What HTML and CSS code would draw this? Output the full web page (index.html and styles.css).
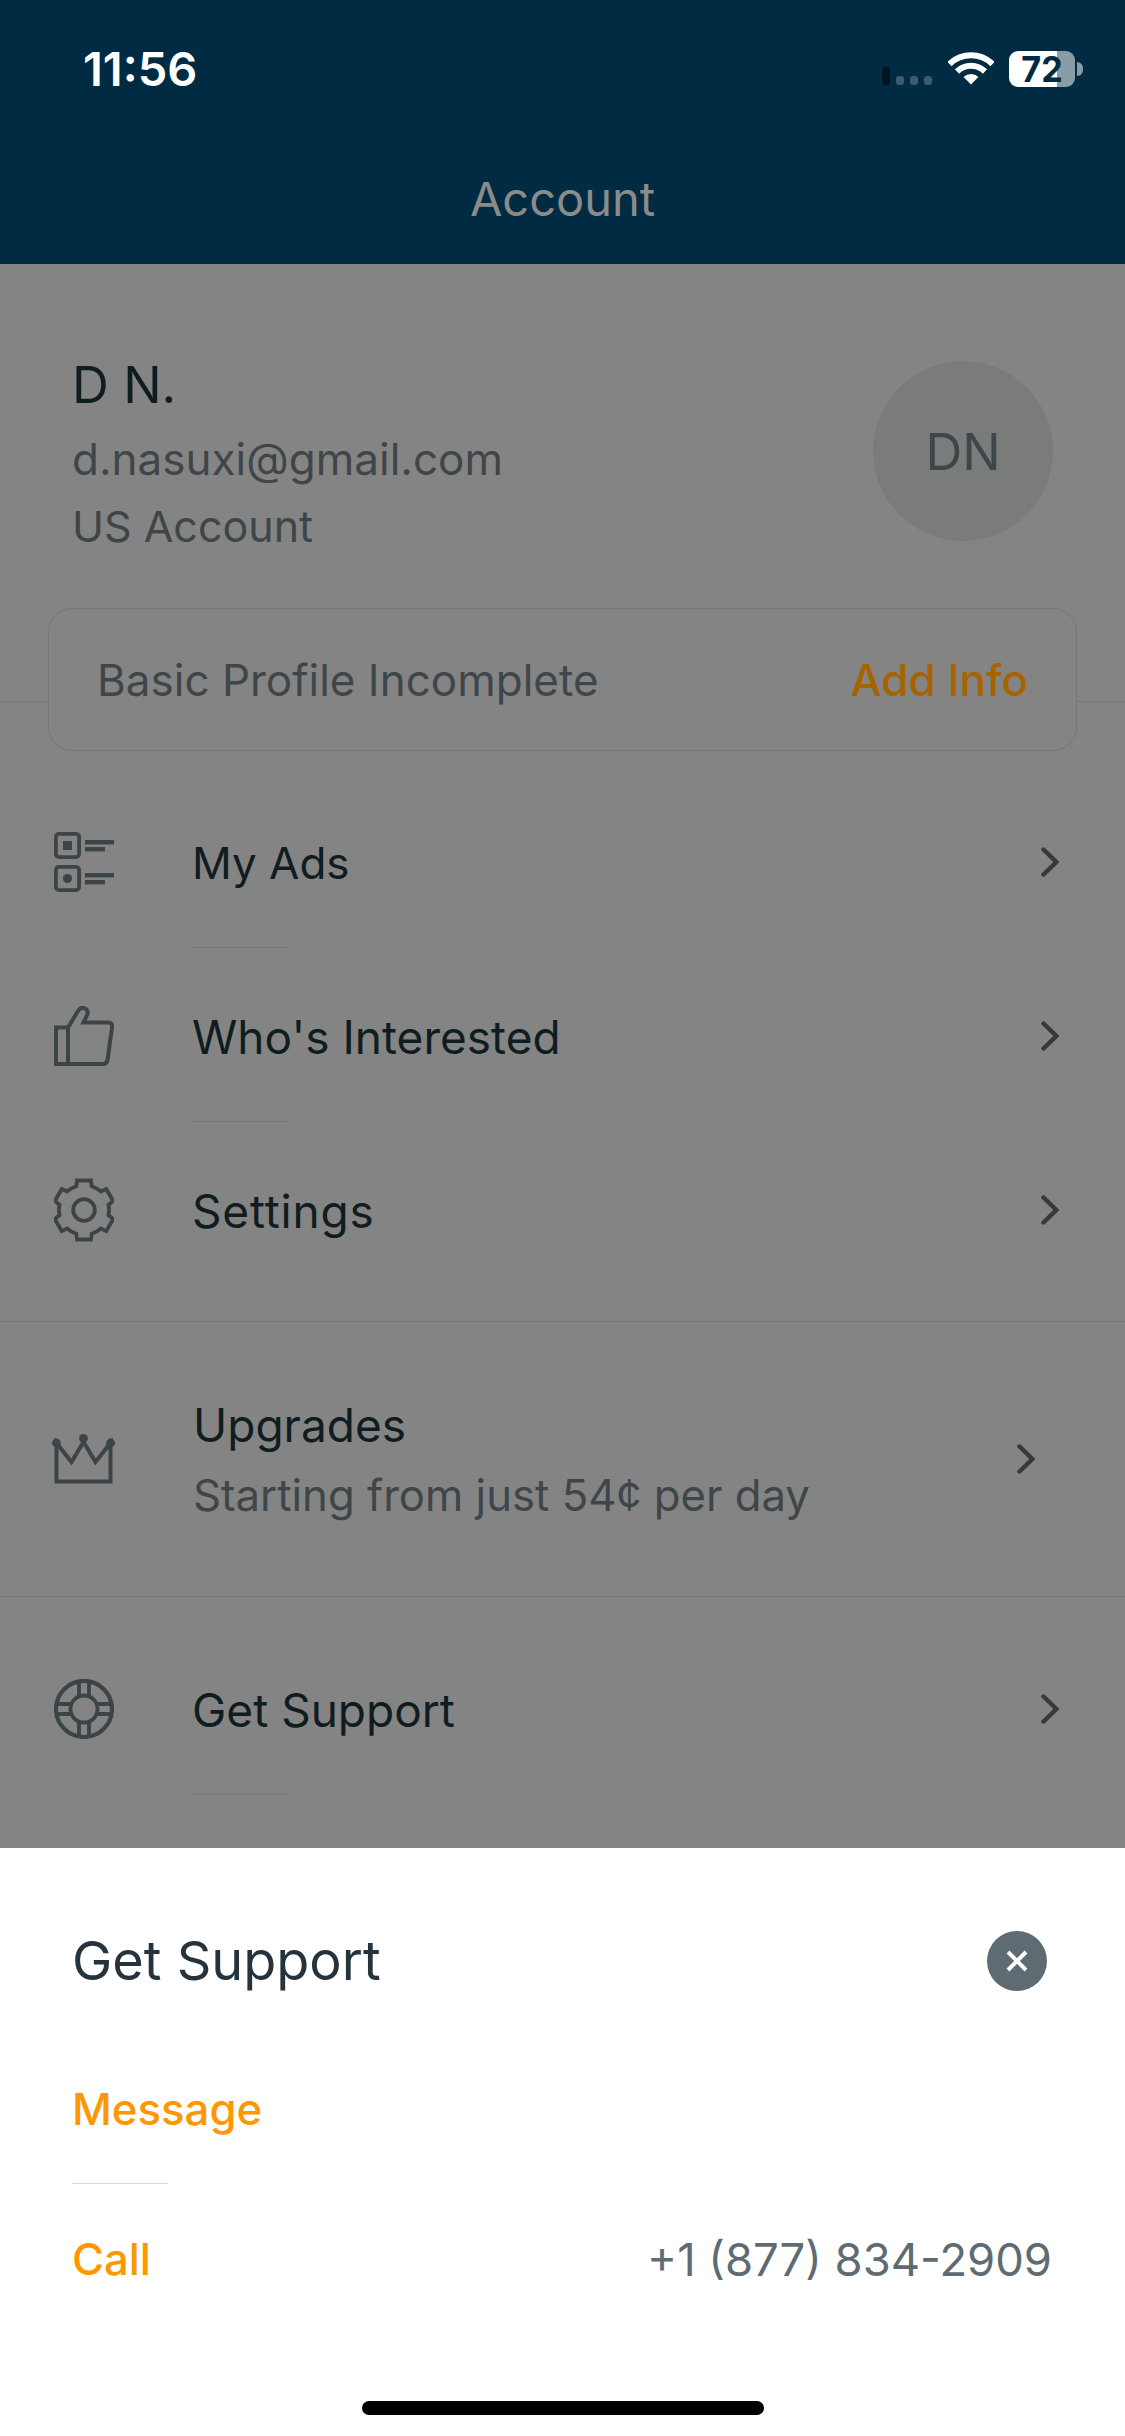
FILE: index.html
```html
<!DOCTYPE html>
<html lang="en">
<head>
<meta charset="utf-8">
<title>Account</title>
<link rel="stylesheet" href="styles.css">
</head>
<body>
<div class="app">
  <header class="header">
    <div class="status">
      <span class="time">11:56</span>
      <div class="status-icons">
        <div class="signal"><i class="bar"></i><i class="dot"></i><i class="dot"></i><i class="dot"></i></div>
        <svg class="wifi" width="46" height="34" viewBox="0 0 46 34"><path d="M1.5 13a31 31 0 0 1 43 0M9 20.5a20 20 0 0 1 28 0" fill="none" stroke="#fff" stroke-width="6"/><path d="M15.5 26a11 11 0 0 1 15 0L23 33.5Z" fill="#fff"/></svg>
        <div class="battery"><span>72</span></div>
        <i class="battery-tip"></i>
      </div>
    </div>
    <h1 class="title">Account</h1>
  </header>

  <main class="content">
    <section class="profile">
      <div class="info">
        <div class="name">D N.</div>
        <div class="email">d.nasuxi@gmail.com</div>
        <div class="region">US Account</div>
      </div>
      <div class="avatar">DN</div>
    </section>
    <div class="card">
      <span class="card-text">Basic Profile Incomplete</span>
      <span class="card-action">Add Info</span>
    </div>

    <div class="list">
      <div class="row">
        <svg class="icon" width="60" height="60" viewBox="0 0 60 60"><g fill="none" stroke="#3c4447" stroke-width="3.8"><rect x="1.9" y="1.9" width="23.2" height="23.2" rx="3"/><rect x="1.9" y="34.9" width="23.2" height="23.2" rx="3"/></g><g fill="#3c4447"><rect x="9" y="9" width="9" height="9"/><circle cx="13.5" cy="46.5" r="4.6"/><rect x="31" y="8" width="29" height="4.4"/><rect x="31" y="15" width="20" height="4.4"/><rect x="31" y="41" width="29" height="4.4"/><rect x="31" y="48" width="20" height="4.4"/></g></svg>
        <span class="label ads">My Ads</span>
        <svg class="chev" width="18" height="30" viewBox="0 0 18 30"><path d="M2.5 2.5 15.3 15 2.5 27.5" fill="none" stroke="#33393c" stroke-width="4.4" stroke-linecap="round"/></svg>
      </div>
      <div class="divider"></div>
      <div class="row">
        <svg class="icon" width="60" height="60" viewBox="0 0 60 60"><path d="M2 21.5H14L24 5Q26.5.8 30.5 2.2 34.5 4 33.5 8L29.5 16.5H54Q59 16.5 58 21.5L53.5 54Q52.5 58 49 58H2ZM14 21.5V58" fill="none" stroke="#3c4447" stroke-width="4"/></svg>
        <span class="label">Who's Interested</span>
        <svg class="chev" width="18" height="30" viewBox="0 0 18 30"><path d="M2.5 2.5 15.3 15 2.5 27.5" fill="none" stroke="#33393c" stroke-width="4.4" stroke-linecap="round"/></svg>
      </div>
      <div class="divider"></div>
      <div class="row">
        <svg class="icon" width="60" height="64" viewBox="0 0 60 64"><path d="M22.3 8.2 23 2.5H37L37.7 8.2A25 25 0 0 1 46.7 13.4L52.2 11 59.2 23 54.5 26.8A25 25 0 0 1 54.5 37.2L59.2 41 52.2 53 46.7 50.6A25 25 0 0 1 37.7 55.8L37 61.5H23L22.3 55.8A25 25 0 0 1 13.3 50.6L7.8 53 .8 41 5.5 37.2A25 25 0 0 1 5.5 26.8L.8 23 7.8 11 13.3 13.4A25 25 0 0 1 22.3 8.2Z" fill="none" stroke="#3c4447" stroke-width="3.8"/><circle cx="30" cy="32" r="10.8" fill="none" stroke="#3c4447" stroke-width="3.8"/></svg>
        <span class="label settings">Settings</span>
        <svg class="chev" width="18" height="30" viewBox="0 0 18 30"><path d="M2.5 2.5 15.3 15 2.5 27.5" fill="none" stroke="#33393c" stroke-width="4.4" stroke-linecap="round"/></svg>
      </div>
    </div>

    <div class="upgrade">
      <svg class="icon crown" width="64" height="50" viewBox="0 0 64 50"><path d="M4.5 9V47.5H58.5V9L43.5 28 31.5 8 19.5 28Z" fill="none" stroke="#3c4447" stroke-width="4"/><g fill="#3c4447"><circle cx="4.4" cy="9" r="4.4"/><circle cx="31.5" cy="4.4" r="4.4"/><circle cx="58.6" cy="9" r="4.4"/></g></svg>
      <div class="upgrade-text">
        <span class="label">Upgrades</span>
        <span class="sub">Starting from just 54¢ per day</span>
      </div>
      <svg class="chev" width="18" height="30" viewBox="0 0 18 30"><path d="M2.5 2.5 15.3 15 2.5 27.5" fill="none" stroke="#33393c" stroke-width="4.4" stroke-linecap="round"/></svg>
    </div>

    <div class="list support">
      <div class="row">
        <svg class="icon" width="60" height="60" viewBox="0 0 60 60"><g fill="none" stroke="#3c4447"><circle cx="30" cy="30" r="28" stroke-width="4.2"/><circle cx="30" cy="30" r="13.5" stroke-width="3.8"/><path d="M25 2.5V16.5M35 2.5V16.5M25 43.5V57.5M35 43.5V57.5M2.5 25H16.5M2.5 35H16.5M43.5 25H57.5M43.5 35H57.5" stroke-width="3.8"/></g></svg>
        <span class="label">Get Support</span>
        <svg class="chev" width="18" height="30" viewBox="0 0 18 30"><path d="M2.5 2.5 15.3 15 2.5 27.5" fill="none" stroke="#33393c" stroke-width="4.4" stroke-linecap="round"/></svg>
      </div>
      <div class="divider"></div>
    </div>
  </main>

  <section class="sheet">
    <div class="sheet-head">
      <h2 class="sheet-title">Get Support</h2>
      <button class="close" aria-label="Close"><svg width="26" height="26" viewBox="0 0 26 26"><path d="M4 4 22 22M22 4 4 22" stroke="#fff" stroke-width="4" fill="none"/></svg></button>
    </div>
    <div class="sheet-row first"><span class="link">Message</span></div>
    <div class="sheet-divider"></div>
    <div class="sheet-row"><span class="link">Call</span><span class="phone">+1 (877) 834-2909</span></div>
    <div class="home-bar"></div>
  </section>
</div>
</body>
</html>
```
FILE: styles.css
```css
* { box-sizing: border-box; }
html, body { margin: 0; padding: 0; }
body { width: 1125px; height: 2436px; overflow: hidden; font-family: Inter, "Liberation Sans", sans-serif; background: #848484; }
.app { width: 1125px; height: 2436px; display: flex; flex-direction: column; }

.header { height: 264px; flex: none; background: #002b42; display: flex; flex-direction: column; }
.status { height: 171px; padding: 45px 42px 0 83px; display: flex; justify-content: space-between; align-items: flex-start; }
.time { color: #fff; font-size: 47px; font-weight: 600; line-height: 48px; }
.status-icons { display: flex; align-items: flex-start; padding-top: 6px; }
.signal { display: flex; align-items: flex-end; gap: 6px; height: 34px; margin-right: 16px; }
.signal .bar { width: 8px; height: 18px; border-radius: 3px; background: #01141f; }
.signal .dot { width: 8px; height: 9px; border-radius: 3px; background: #3d5a6e; }
.wifi { margin-right: 15px; }
.battery { width: 66px; height: 36px; border-radius: 9px; background: linear-gradient(90deg, #fff 0 48px, #8a9ca6 48px); color: #002b42; font-size: 36px; font-weight: 700; line-height: 36px; text-align: center; }
.battery span { display: block; transform: scaleX(.95); }
.battery-tip { width: 6px; height: 14px; margin: 11px 0 0 2px; border-radius: 0 7px 7px 0; background: #8a9ca6; }
.title { margin: 0; text-align: center; color: #8b8b8b; font-size: 47px; font-weight: 400; line-height: 56px; }

.content { flex: 1; min-height: 0; overflow: hidden; }
.profile { height: 438px; padding: 88px 72px 0 72px; border-bottom: 1px solid #777; display: flex; justify-content: space-between; align-items: flex-start; }
.name { color: #101d20; font-size: 51px; line-height: 66px; }
.email { color: #3f4649; font-size: 44px; line-height: 66px; margin-top: 8px; }
.region { color: #3f4649; font-size: 43px; line-height: 66px; margin-top: 1px; }
.avatar { width: 180px; height: 180px; margin: 9px 0 0; border-radius: 50%; background: #7a7c7c; color: #3f4649; display: flex; align-items: center; justify-content: center; font-size: 51px; }

.card { position: relative; margin: -94px 48px 0; height: 143px; padding: 0 48px; border: 1px solid #777; border-radius: 24px; background: #848484; display: flex; justify-content: space-between; align-items: center; }
.card-text { color: #3f4649; font-size: 44px; }
.card-action { color: #a66400; font-size: 44px; font-weight: 500; }

.list { margin-top: 23px; }
.list.support { margin-top: 24px; }
.row { height: 173px; padding: 2px 66px 0 54px; display: flex; align-items: center; }
.icon { flex: none; }
.label { color: #101d20; font-size: 46px; line-height: 56px; }
.row .label { flex: 1; margin-left: 78px; margin-top: 2px; }
.row .label.ads { font-size: 44px; }
.row .label.settings { letter-spacing: .8px; }
.chev { flex: none; }
.divider { width: 96px; height: 1px; margin-left: 192px; background: #777; }

.upgrade { height: 276px; margin-top: 26px; padding: 0 90px 0 52px; border-top: 1px solid #777; border-bottom: 1px solid #777; display: flex; align-items: center; }
.upgrade-text { flex: 1; margin-left: 77px; margin-top: 2px; display: flex; flex-direction: column; gap: 15px; }
.sub { color: #3f4649; font-size: 43.7px; line-height: 56px; }

.sheet { height: 588px; flex: none; background: #fff; position: relative; padding: 0 73px 0 72px; }
.sheet-head { height: 226px; display: flex; justify-content: space-between; align-items: center; }
.sheet-title { margin: 0; color: #25333d; font-size: 54px; font-weight: 400; line-height: 60px; }
.close { width: 60px; height: 60px; margin-right: 5px; padding: 0; border: 0; border-radius: 50%; background: #5f6b73; display: flex; align-items: center; justify-content: center; }
.sheet-row { height: 78px; display: flex; justify-content: space-between; align-items: center; }
.sheet-row.first { height: 72px; margin-bottom: 37px; }
.sheet-divider { width: 96px; height: 1px; margin: 0 0 37px 0; background: #d8d8d8; }
.link { color: #ff9800; font-size: 43.7px; font-weight: 500; line-height: 56px; }
.phone { color: #5f6b73; font-size: 45.4px; line-height: 56px; }
.home-bar { position: absolute; left: 362px; top: 553px; width: 402px; height: 14px; border-radius: 7px; background: #000; }
```
